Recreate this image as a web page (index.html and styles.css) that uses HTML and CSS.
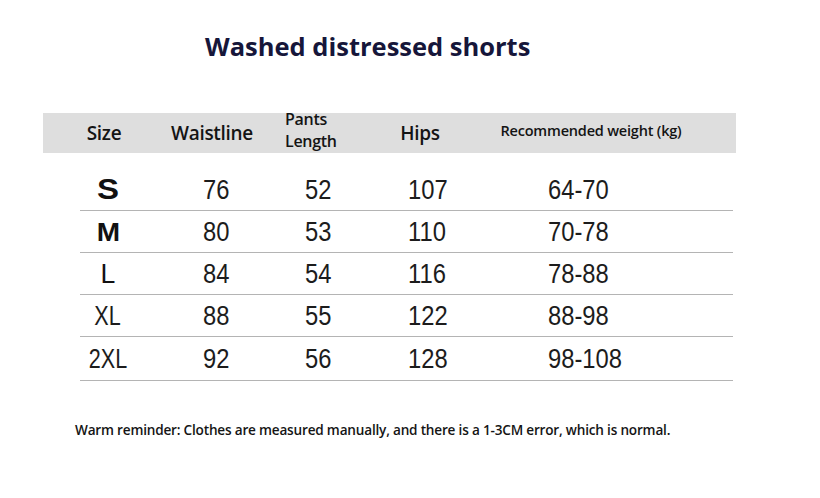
FILE: index.html
```html
<!DOCTYPE html>
<html>
<head>
<meta charset="utf-8">
<link rel="stylesheet" href="styles.css">
</head>
<body>
<div class="page">
  <h1 class="title">Washed distressed shorts</h1>
  <div class="head">
    <div class="hc">Size</div>
    <div class="hc">Waistline</div>
    <div class="hc two"><span class="ln">Pants</span><span class="ln">Length</span></div>
    <div class="hc">Hips</div>
    <div class="hc small">Recommended weight (kg)</div>
  </div>
  <div class="table">
    <div class="row">
      <div class="size"><span class="s-s">S</span></div>
      <div class="v">76</div><div class="v">52</div><div class="v">107</div><div class="v">64-70</div>
    </div>
    <div class="row">
      <div class="size"><span class="s-m">M</span></div>
      <div class="v">80</div><div class="v">53</div><div class="v">110</div><div class="v">70-78</div>
    </div>
    <div class="row">
      <div class="size"><span class="s-l">L</span></div>
      <div class="v">84</div><div class="v">54</div><div class="v">116</div><div class="v">78-88</div>
    </div>
    <div class="row">
      <div class="size"><span class="s-n">XL</span></div>
      <div class="v">88</div><div class="v">55</div><div class="v">122</div><div class="v">88-98</div>
    </div>
    <div class="row">
      <div class="size"><span class="s-n">2XL</span></div>
      <div class="v">92</div><div class="v">56</div><div class="v">128</div><div class="v">98-108</div>
    </div>
  </div>
  <p class="note">Warm reminder: Clothes are measured manually, and there is a 1-3CM error, which is normal.</p>
</div>
</body>
</html>
```
FILE: styles.css
```css
* { box-sizing: border-box; }
html, body { margin: 0; padding: 0; background: #ffffff; }
.page {
  width: 820px;
  height: 498px;
  overflow: hidden;
  font-family: "Open Sans", "Liberation Sans", sans-serif;
  color: #111;
}
.title {
  margin: 0;
  padding-top: 28px;
  padding-left: 205px;
  height: 113px;
  font-size: 25.5px;
  font-weight: 700;
  line-height: 36px;
  color: #16163a;
}
.head {
  margin-left: 43px;
  width: 693px;
  height: 40px;
  background: #dedede;
  display: grid;
  grid-template-columns: 122px 94px 110px 102px 240px;
  align-items: center;
}
.hc {
  text-align: center;
  font-size: 19px;
  font-weight: 600;
  letter-spacing: -0.3px;
  line-height: 22px;
  color: #141414;
}
.hc.two {
  display: flex;
  flex-direction: column;
  font-size: 16px;
  line-height: 22px;
  text-align: left;
  padding-left: 26px;
  margin-top: -6px;
}
.ln { display: block; height: 22px; }
.hc.small {
  font-size: 14.5px;
  letter-spacing: -0.2px;
  margin-top: -4px;
}
.table {
  margin-left: 80px;
  width: 653px;
  margin-top: 16px;
}
.row {
  height: 42px;
  display: grid;
  grid-template-columns: 123px 102px 103px 140px 1fr;
  align-items: center;
  border-bottom: 1px solid #b4b4b4;
  font-family: "Liberation Sans", sans-serif;
  font-size: 27px;
  color: #1c1c1c;
}
.row:last-child { height: 44px; }
.size { width: 56px; text-align: center; line-height: 30px; }
.v { line-height: 30px; transform: scaleX(0.88); transform-origin: left center; }
.s-s { font-weight: 700; font-size: 30px; color: #111; display: inline-block; transform: scaleX(1.1); }
.s-m { font-weight: 700; font-size: 25px; color: #111; display: inline-block; transform: scaleX(1.12); }
.s-l { font-weight: 400; font-size: 28px; color: #111; display: inline-block; transform: scaleX(0.95); }
.s-n { font-size: 27px; display: inline-block; transform: scaleX(0.8); }
.note {
  margin: 39px 0 0 75px;
  font-size: 13.6px;
  font-weight: 600;
  letter-spacing: -0.2px;
  color: #151515;
}
```
